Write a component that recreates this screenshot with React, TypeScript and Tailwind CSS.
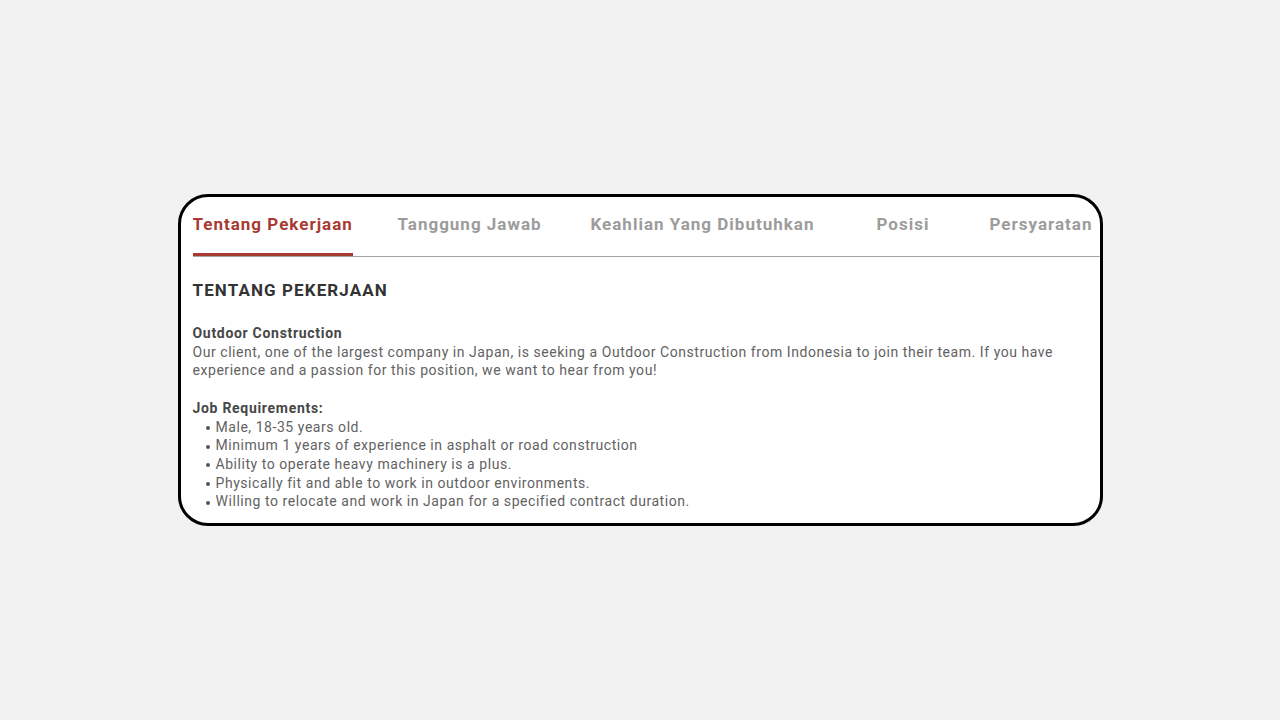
import React from 'react';

const tabs = [
  { label: 'Tentang Pekerjaan', width: 'w-[205px]', active: true },
  { label: 'Tanggung Jawab', width: 'w-[193px]' },
  { label: 'Keahlian Yang Dibutuhkan', width: 'w-[286px]' },
  { label: 'Posisi', width: 'w-[113px]' },
  { label: 'Persyaratan', width: 'w-[130px]' },
];

const requirements = [
  'Male, 18-35 years old.',
  'Minimum 1 years of experience in asphalt or road construction',
  'Ability to operate heavy machinery is a plus.',
  'Physically fit and able to work in outdoor environments.',
  'Willing to relocate and work in Japan for a specified contract duration.',
];

function App() {
  return (
    <div
      className="flex h-[720px] w-full items-start justify-center bg-[#f2f2f2] pt-[194px]"
      style={{ fontFamily: 'Roboto, "Liberation Sans", sans-serif' }}
    >
      <div className="w-[925px] overflow-hidden rounded-[30px] border-[3px] border-black bg-white pb-[12px] pl-[12px]">
        <div className="flex h-[60px] items-end overflow-hidden border-b border-[#a5a5a5]">
          {tabs.map((tab) => (
            <div key={tab.label} className={`${tab.width} shrink-0`}>
              <span
                className={`inline-block whitespace-nowrap pb-[17px] text-[17px] leading-[24px] font-bold tracking-[1px] ${
                  tab.active
                    ? 'border-b-[3px] border-[#a83a32] text-[#a83a32]'
                    : 'mb-[3px] text-[#9c9c9c]'
                }`}
              >
                {tab.label}
              </span>
            </div>
          ))}
        </div>

        <h2 className="mt-[21px] text-[17px] leading-[24px] font-bold tracking-[1.1px] text-[#333]">
          TENTANG PEKERJAAN
        </h2>

        <div className="mt-[22px] pr-[14px] text-[14px] leading-[18.7px] tracking-[0.55px] text-[#626262]">
          <p className="font-bold tracking-[0.7px] text-[#474747]">Outdoor Construction</p>
          <p>
            Our client, one of the largest company in Japan, is seeking a Outdoor
            Construction from Indonesia to join their team. If you have experience
            and a passion for this position, we want to hear from you!
          </p>
          <p className="mt-[18.7px] font-bold tracking-[0.7px] text-[#474747]">Job Requirements:</p>
          <ul>
            {requirements.map((item) => (
              <li key={item} className="flex items-center pl-[13px]">
                <span className="mr-[6px] mt-[2px] h-[4px] w-[4px] shrink-0 rounded-full bg-[#555]" />
                <span>{item}</span>
              </li>
            ))}
          </ul>
        </div>
      </div>
    </div>
  );
}

export default App;
